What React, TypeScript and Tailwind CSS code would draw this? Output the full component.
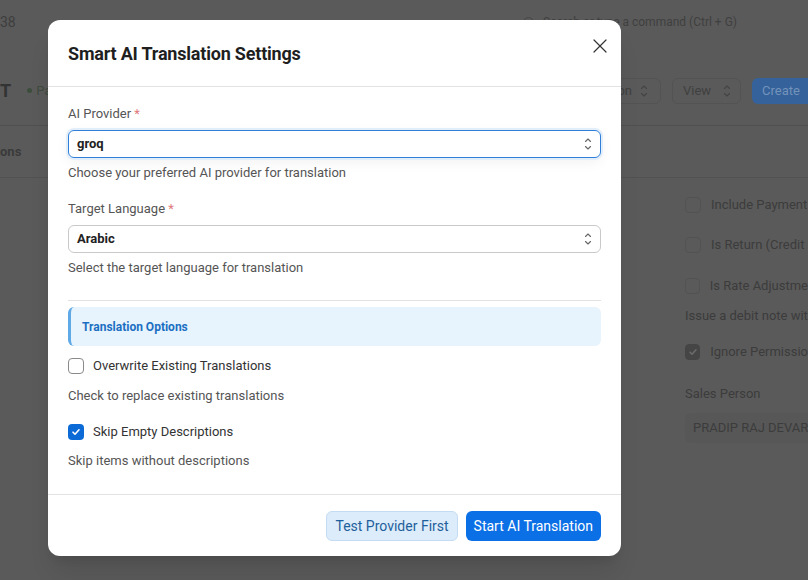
import { X } from "lucide-react";

const font = { fontFamily: "Roboto, 'Noto Sans', sans-serif" };

function UpDown({ className = "" }: { className?: string }) {
  return (
    <svg width="8" height="14" viewBox="0 0 8 14" fill="none" className={className}>
      <path d="M1.5 4.5 4 2l2.5 2.5" stroke="currentColor" strokeWidth="1.1" strokeLinecap="round" strokeLinejoin="round" />
      <path d="M1.5 9.5 4 12l2.5-2.5" stroke="currentColor" strokeWidth="1.1" strokeLinecap="round" strokeLinejoin="round" />
    </svg>
  );
}

function Check() {
  return (
    <svg width="10" height="10" viewBox="0 0 10 10" fill="none">
      <path d="M2 5.2 4 7.2 8 2.8" stroke="white" strokeWidth="1.6" strokeLinecap="round" strokeLinejoin="round" />
    </svg>
  );
}

function DimCheck({ checked = false }: { checked?: boolean }) {
  return (
    <div className={`w-4 h-4 rounded-[4px] border flex items-center justify-center ${checked ? "bg-[#454545] border-[#454545]" : "border-[#525252]"}`}>
      {checked && (
        <svg width="10" height="10" viewBox="0 0 10 10" fill="none">
          <path d="M2 5.2 4 7.2 8 2.8" stroke="#6a6a6a" strokeWidth="1.6" strokeLinecap="round" strokeLinejoin="round" />
        </svg>
      )}
    </div>
  );
}

export default function App() {
  return (
    <div className="relative w-[808px] h-[580px] overflow-hidden bg-[#5a5a5a] text-[#3a3a3a]" style={font}>
      {/* DIMMED PAGE BEHIND */}
      <div className="h-[60px] flex items-center justify-between pl-0 pr-[71px] pb-[16px]">
        <span className="text-[14px] text-[#3e3e3e]">38</span>
        <div className="flex items-center gap-[9px] text-[12px] text-[#404040]">
          <span className="w-[11px] h-[11px] rounded-full border border-[#474747]"></span>
          <span>Search or type a command (Ctrl + G)</span>
        </div>
      </div>
      <div className="h-[66px] flex items-center justify-between border-b border-[#505050] pb-[4px]">
        <div className="flex items-center gap-4">
          <span className="text-[18px] font-bold text-[#333]">T</span>
          <span className="flex items-center gap-1 text-[13px] text-[#3e4a3e]">
            <span className="w-[5px] h-[5px] rounded-full bg-[#3c4d3c]"></span>Pa
          </span>
        </div>
        <div className="flex items-center gap-[11px]">
          <div className="h-[26px] w-[80px] rounded-md border border-[#535353] flex items-center justify-end gap-2 pr-3 text-[13px] text-[#404040]">
            on <UpDown className="text-[#444]" />
          </div>
          <div className="h-[26px] w-[69px] rounded-md border border-[#535353] flex items-center gap-3 pl-[10px] text-[13px] text-[#404040]">
            View <UpDown className="text-[#444]" />
          </div>
          <div className="h-[26px] w-[56px] rounded-l-md bg-[#35629a] flex items-center pl-[10px] text-[13px] text-[#7393bb]">
            Create
          </div>
        </div>
      </div>
      <div className="h-[52px] flex items-center border-b border-[#525252]">
        <span className="text-[13px] font-bold text-[#3a3a3a]">ons</span>
      </div>
      <div className="flex justify-end">
        <div className="w-[123px] pt-[18px] flex flex-col text-[13px] text-[#3c3c3c]">
          <div className="flex items-center gap-[10px] h-[18px] whitespace-nowrap">
            <DimCheck />Include Payment
          </div>
          <div className="flex items-center gap-[10px] h-[18px] mt-[22px] whitespace-nowrap">
            <DimCheck />Is Return (Credit
          </div>
          <div className="flex items-center gap-[10px] h-[18px] mt-[23px] whitespace-nowrap">
            <DimCheck />Is Rate Adjustme
          </div>
          <div className="h-[18px] mt-[11px] whitespace-nowrap">Issue a debit note wit</div>
          <div className="flex items-center gap-[10px] h-[18px] mt-[19px] whitespace-nowrap">
            <DimCheck checked />Ignore Permissio
          </div>
          <div className="h-[18px] mt-[23px] whitespace-nowrap">Sales Person</div>
          <div className="h-[30px] mt-[11px] bg-[#575757] rounded-l-md flex items-center pl-2 whitespace-nowrap text-[13px]">
            PRADIP RAJ DEVAR
          </div>
        </div>
      </div>

      {/* MODAL */}
      <div className="absolute left-[48px] top-[20px] w-[573px] h-[536px] bg-white rounded-[12px] shadow-xl flex flex-col text-[#383838]">
        <div className="relative h-[67px] border-b border-[#e2e2e2] flex items-center px-5 shrink-0">
          <h2 className="text-[18px] font-bold text-[#1f1f1f] tracking-[-0.2px]">Smart AI Translation Settings</h2>
          <X className="absolute right-[9px] top-[14px] w-[24px] h-[24px] text-[#333]" strokeWidth={1.2} />
        </div>

        <div className="flex-1 px-5 pt-[19px]">
          <label className="block text-[13px] leading-4 text-[#555]">
            AI Provider <span className="text-[#e0787a]">*</span>
          </label>
          <div className="mt-[8px] h-[28px] rounded-[6px] border border-[#2f7fd8] shadow-[0_0_0_2px_#e3eefb,0_4px_14px_rgba(0,0,0,0.06)] flex items-center justify-between px-[8px]">
            <span className="text-[13px] font-bold text-[#222]">groq</span>
            <UpDown className="text-[#666]" />
          </div>
          <p className="mt-[7px] text-[13px] leading-4 text-[#555]">Choose your preferred AI provider for translation</p>

          <label className="block mt-[20px] text-[13px] leading-4 text-[#555]">
            Target Language <span className="text-[#e0787a]">*</span>
          </label>
          <div className="mt-[8px] h-[28px] rounded-[6px] border border-[#c9c9c9] flex items-center justify-between px-[8px]">
            <span className="text-[13px] font-bold text-[#222]">Arabic</span>
            <UpDown className="text-[#666]" />
          </div>
          <p className="mt-[7px] text-[13px] leading-4 text-[#555]">Select the target language for translation</p>

          <div className="mt-[24px] border-t border-[#e2e2e2]"></div>

          <div className="mt-[6px] h-[39px] rounded-[6px] bg-[#e8f4fd] border-l-[3px] border-[#5ea9e6] flex items-center pl-[11px]">
            <span className="text-[12px] font-bold text-[#1b6fc2]">Translation Options</span>
          </div>

          <div className="mt-[12px] flex items-center gap-[9px] h-4">
            <div className="w-4 h-4 rounded-[4px] border border-[#8a8a8a] bg-white"></div>
            <span className="text-[13px] text-[#333]">Overwrite Existing Translations</span>
          </div>
          <p className="mt-[14px] text-[13px] leading-4 text-[#555]">Check to replace existing translations</p>

          <div className="mt-[20px] flex items-center gap-[9px] h-4">
            <div className="w-4 h-4 rounded-[4px] bg-[#0b6ad6] flex items-center justify-center">
              <Check />
            </div>
            <span className="text-[13px] text-[#333]">Skip Empty Descriptions</span>
          </div>
          <p className="mt-[13px] text-[13px] leading-4 text-[#555]">Skip items without descriptions</p>
        </div>

        <div className="h-[62px] border-t border-[#e2e2e2] flex items-start justify-end gap-2 px-5 pt-[16px] shrink-0">
          <button className="h-[30px] px-[8px] rounded-[6px] bg-[#ddecfa] border border-[#c3dcf3] text-[14px] text-[#1d5f9c]">
            Test Provider First
          </button>
          <button className="h-[30px] px-[8px] rounded-[6px] bg-[#0b6fe6] text-[14px] text-white">
            Start AI Translation
          </button>
        </div>
      </div>
    </div>
  );
}
